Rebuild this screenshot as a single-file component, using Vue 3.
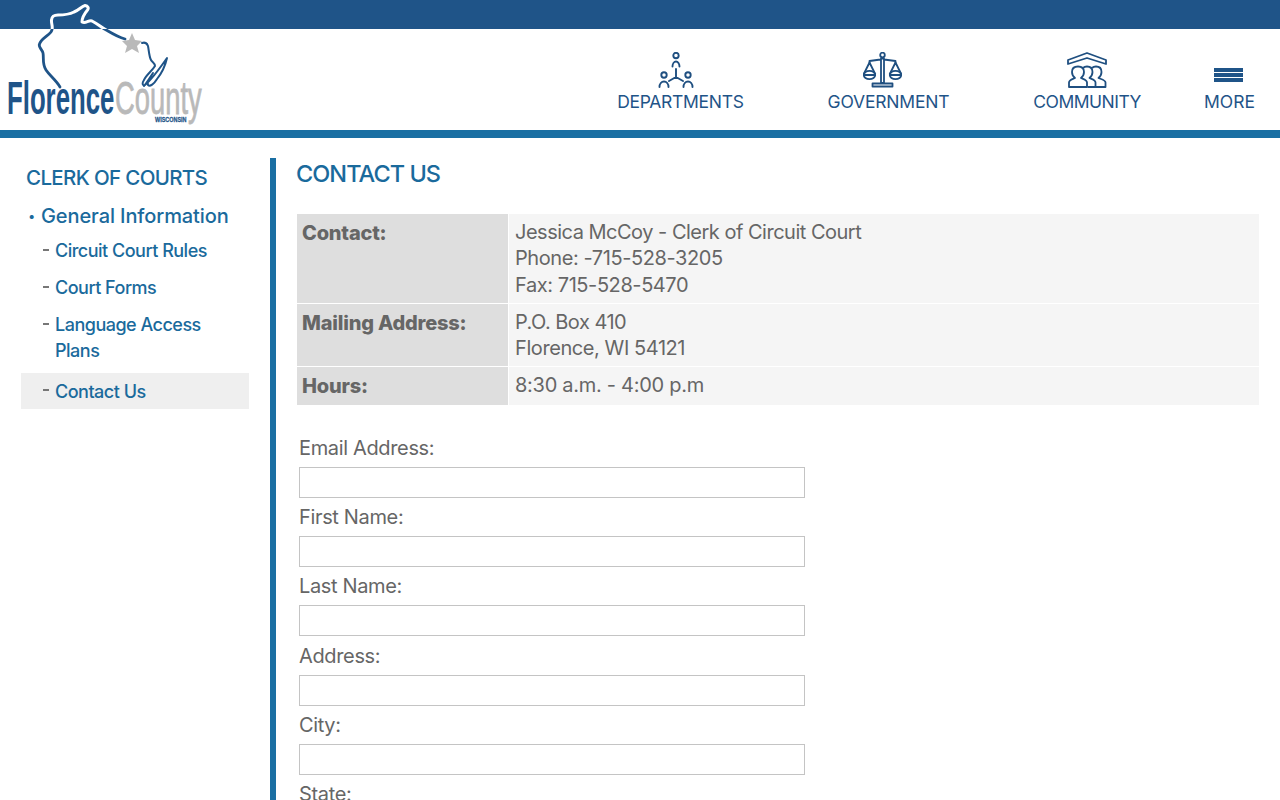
<script setup>
const rows = [
  { h: 'Contact:', lines: ['Jessica McCoy - Clerk of Circuit Court', 'Phone: -715-528-3205', 'Fax: 715-528-5470'] },
  { h: 'Mailing Address:', lines: ['P.O. Box 410', 'Florence, WI 54121'] },
  { h: 'Hours:', lines: ['8:30 a.m. - 4:00 p.m'] }
]
const fields = ['Email Address:', 'First Name:', 'Last Name:', 'Address:', 'City:', 'State:']
const outline = 'M60 87 C56 80 50 76 46 70 C42 64 44 58 43 53 C42 49 38 47 39.500 44 C41 39 48 36 51 32 C54 28 51 24 51.500 20 C52 16 54 15 58 15 C64 15 70 14 74 12 C79 10 82 6 85 5.500 C88 6 89 8 87.500 10 C85 13 82 17 82 22 C86 24 88 20 92 21 C98 24 102 28 108 31 C113 34 118 37 125 39'
</script>

<template>
  <div class="page">
    <div class="topbar"></div>
    <header class="header">
      <svg class="logo" width="210" height="130" viewBox="0 0 210 130">
        <defs><clipPath id="barclip"><rect x="0" y="0" width="210" height="29"/></clipPath></defs>
        <path :d="outline" fill="none" stroke="#1f5488" stroke-width="2.800" stroke-linejoin="round" stroke-linecap="round"/>
        <path :d="outline" clip-path="url(#barclip)" fill="none" stroke="#fff" stroke-width="3" stroke-linejoin="round" stroke-linecap="round"/>
        <path d="M142 43 C145 42 147 43 148 46 C149 51 149 56 151 60 C152 62 155 63 155 66 C152 71 146 75 144 80 C142 83 142 86 145 85 C150 81 160 68 167 58 C165 67 161 74 157 79 C154 84 150 87 148 85 C147 82 150 77 153 73 C149 79 146 84 144 86" fill="none" stroke="#1f5488" stroke-width="2" stroke-linejoin="round" stroke-linecap="round"/>
        <polygon points="132,33 135,40 142,41 137,46 139,53 132,49 125,53 127,46 122,41 129,40" fill="#b9b9b9"/>
        <text class="logo-a" transform="translate(7 113.500) scale(.56 1)">Florence</text>
        <text class="logo-b" transform="translate(115 113.500) scale(.595 1)">County</text>
        <text class="logo-c" transform="translate(155 122) scale(.84 1)">WISCONSIN</text>
      </svg>
      <nav class="nav">
        <a class="nav-item dep">
          <svg width="36" height="36" viewBox="0 0 36 36" fill="none" stroke="#1f4f80" stroke-width="1.900" stroke-linecap="round">
            <circle cx="18" cy="3.500" r="2.700"/><path d="M14.500 14.500a3.500 5 0 0 1 7 0"/>
            <circle cx="6" cy="23" r="2.700"/><path d="M1.500 35a4.500 5.500 0 0 1 9 0"/>
            <circle cx="30" cy="23" r="2.700"/><path d="M25.500 35a4.500 5.500 0 0 1 9 0"/>
            <path d="M18 17v8M18 25l-7 4M18 25l7 4"/>
          </svg>
          <span>DEPARTMENTS</span>
        </a>
        <a class="nav-item gov">
          <svg width="39" height="36" viewBox="0 0 39 36" fill="none" stroke="#1f4f80" stroke-width="1.800" stroke-linecap="round" stroke-linejoin="round">
            <circle cx="19.500" cy="3" r="2.300"/>
            <path d="M18 6.500h3V31h-3zM9.500 31.500h20v3h-20zM6.500 10.500V9l11-1.500M21 7.500l11.500 1.500v1.500"/>
            <path d="M6.500 10.500 .8 22M6.500 10.500 12.200 22M32.500 10.500 26.800 22M32.500 10.500 38.200 22"/>
            <path d="M.8 23a5.700 4.200 0 0 1 11.400 0 5.700 4.200 0 0 1-11.400 0ZM26.800 23a5.700 4.200 0 0 1 11.400 0 5.700 4.200 0 0 1-11.400 0Z"/>
            <path d="M.8 23h11.400M26.800 23h11.400"/>
          </svg>
          <span>GOVERNMENT</span>
        </a>
        <a class="nav-item com">
          <svg width="40" height="36" viewBox="0 0 40 36" fill="none" stroke="#1f4f80" stroke-width="1.800" stroke-linejoin="round">
            <path d="M1 8 20 1 39 8v4L20 6 1 12Z"/>
            <path d="M2 35v-4.500c0-2.500 4-3.500 6-4.500-2.500-2-3-4-3-6 0-3.500 2.500-5.500 6-5.500s6 2 6 5.500c0 2-.5 4-3 6 2 1 6 2 6 4.500V35Z"/>
            <path d="M16 16c1-1 2.500-1.500 4-1.500 3.500 0 5.500 2 5.500 5.500 0 2-.5 4-3 6 2 1 6 2 6 4.500V35h-8"/>
            <path d="M25 16c1-1 2.500-1.500 4-1.500 3.500 0 5.500 2 5.500 5.500 0 2-.5 4-3 6 2 1 7 2 7 4.500V35h-10"/>
          </svg>
          <span>COMMUNITY</span>
        </a>
        <a class="nav-item more">
          <span class="burger"><i></i><i></i><i></i></span>
          <span>MORE</span>
        </a>
      </nav>
    </header>
    <div class="rule"></div>
    <div class="main">
      <aside class="side">
        <div class="side-title">CLERK OF COURTS</div>
        <div class="side-l1"><b>•</b><span>General Information</span></div>
        <ul class="sub">
          <li><span class="dash"></span><a>Circuit Court Rules</a></li>
          <li><span class="dash"></span><a>Court Forms</a></li>
          <li><span class="dash"></span><a>Language Access Plans</a></li>
          <li class="active"><span class="dash"></span><a>Contact Us</a></li>
        </ul>
      </aside>
      <main class="content">
        <h1>CONTACT US</h1>
        <div class="table">
          <div class="row" v-for="r in rows" :key="r.h">
            <div class="th">{{ r.h }}</div>
            <div class="td"><div v-for="l in r.lines" :key="l">{{ l }}</div></div>
          </div>
        </div>
        <form class="form">
          <div class="field" v-for="f in fields" :key="f">
            <label>{{ f }}</label>
            <input type="text" />
          </div>
        </form>
      </main>
    </div>
  </div>
</template>

<style>
html, body { margin: 0; overflow: hidden; background: #fff; }
</style>

<style scoped>
.page { height: 800px; overflow: hidden; font-family: Inter, "Liberation Sans", sans-serif; position: relative; }
.topbar { height: 29px; background: #1f5488; }
.header { height: 101px; display: flex; justify-content: flex-end; }
.rule { height: 8px; background: #1a6fa3; }
.logo { position: absolute; left: 0; top: 0; }
.logo-a, .logo-b { font-family: "Liberation Sans", sans-serif; font-size: 46px; }
.logo-a { fill: #1f5488; font-weight: 700; }
.logo-b { fill: #b9b9b9; stroke: #b9b9b9; stroke-width: .8px; }
.logo-c { font-family: "Liberation Sans", sans-serif; font-size: 6.500px; font-weight: 700; fill: #1f5488; stroke: #1f5488; stroke-width: .25px; }
.nav { display: flex; align-items: flex-start; padding-top: 23px; }
.nav-item { display: flex; flex-direction: column; align-items: center; color: #1f5488; font-size: 17.500px; line-height: 22px; }
.nav-item svg { display: block; margin-bottom: 3px; }
.dep { margin-right: 84px; letter-spacing: -.3px; }
.dep svg { margin-right: 9px; }
.gov { margin-right: 84px; letter-spacing: -.2px; }
.gov svg { margin-right: 11px; }
.com { margin-right: 63px; letter-spacing: -.5px; }
.more { margin-right: 25px; }
.burger { display: flex; flex-direction: column; gap: 1.500px; height: 39px; justify-content: center; padding: 7px 3px 0 0; box-sizing: border-box; }
.burger i { display: block; width: 29px; height: 3.500px; background: #1f5488; }
.main { display: flex; align-items: flex-start; padding-top: 20px; }
.side { width: 228px; margin-left: 21px; margin-right: 21px; padding-top: 7px; color: #1a6a9c; }
.side-title { font-size: 20.500px; line-height: 26px; padding-left: 5px; font-weight: 500; letter-spacing: -.65px; }
.side-l1 { font-size: 20px; line-height: 26px; margin-top: 12px; padding-left: 7px; display: flex; font-weight: 500; letter-spacing: -.1px; }
.side-l1 b { width: 13px; font-weight: 400; font-size: 13px; }
.sub { list-style: none; margin: 9px 0 0; padding: 0; font-size: 18px; line-height: 26px; font-weight: 500; letter-spacing: -.5px; }
.sub li { display: flex; padding: 0 20px 11px 22px; }
.sub li.active { background: #efefef; padding: 6px 20px 4px 22px; margin-top: -2px; }
.dash { width: 6px; height: 1.500px; margin: 11px 6px 0 0; flex: none; background: #777; }
.active .dash { margin-top: 10px; }
.content { flex: 1; border-left: 6px solid #1a6fa3; padding: 0 21px 0 20px; height: 700px; }
h1 { margin: 0; padding-top: 1px; font-size: 23.500px; line-height: 29px; font-weight: 500; color: #1a6a9c; letter-spacing: -.95px; }
.table { margin: 26px 0 0 1px; color: #666; font-size: 20px; line-height: 26.250px; }
.row { display: flex; margin-bottom: 1px; }
.th { width: 211px; background: #dedede; padding: 6px 5px 5.500px; box-sizing: border-box; font-weight: 800; color: #666; flex: none; letter-spacing: -.2px; }
.td { flex: 1; background: #f5f5f5; padding: 5px 7px 5px 6px; margin-left: 1px; letter-spacing: -.42px; }
.td > div:first-child { letter-spacing: -.5px; }
.row:last-child .td > div { letter-spacing: -.28px; }
.form { margin: 29.850px 0 0 3px; color: #666; font-size: 20px; letter-spacing: -.35px; }
.field { height: 69.300px; }
.field label { display: block; line-height: 26px; }
.field input { display: block; width: 506px; height: 31px; box-sizing: border-box; border: 1px solid #c4c4c4; margin: 6px 0 0; padding: 0; background: #fff; }
</style>
